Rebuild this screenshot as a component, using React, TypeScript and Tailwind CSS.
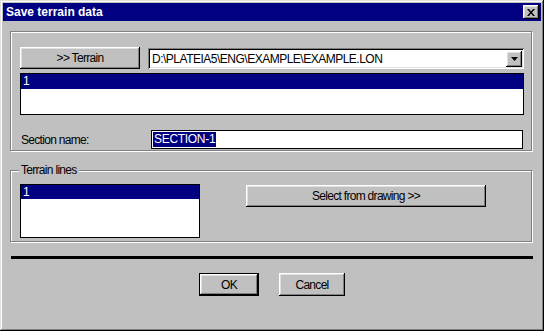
import React from 'react';

const raised =
  'bg-[#c0c0c0] shadow-[inset_-1px_-1px_0_#000,inset_1px_1px_0_#fff,inset_-2px_-2px_0_#808080,inset_2px_2px_0_#dfdfdf]';
const sunken =
  'bg-white shadow-[inset_1px_1px_0_#808080,inset_-1px_-1px_0_#fff,inset_2px_2px_0_#000,inset_-2px_-2px_0_#dfdfdf]';
const etched = 'border border-[#808080] shadow-[inset_1px_1px_0_#fff,1px_1px_0_#fff]';
const body = "font-['Liberation_Sans',Arial,sans-serif] text-[12px] tracking-[-0.7px] text-black";

function Button({ label, className = '' }: { label: string; className?: string }) {
  return (
    <div className={`${raised} flex items-center justify-center leading-none ${className}`}>
      <span>{label}</span>
    </div>
  );
}

export default function App() {
  return (
    <div className={`${body} w-[544px] h-[331px] bg-[#c0c0c0] p-[3px] flex flex-col shadow-[inset_-1px_-1px_0_#000,inset_1px_1px_0_#dfdfdf,inset_-2px_-2px_0_#808080,inset_2px_2px_0_#fff]`}>
      {/* Title bar */}
      <div className="h-[18px] bg-[#000080] flex items-center justify-between pl-[3px] pr-[2px]">
        <span className="font-bold text-white leading-none tracking-normal">Save terrain data</span>
        <div className={`${raised} w-[16px] h-[14px] flex items-center justify-center`}>
          <svg width="8" height="7" viewBox="0 0 8 7">
            <path d="M0 0h2l2 2.5L6 0h2L5 3.5 8 7H6L4 4.5 2 7H0l3-3.5z" fill="#000" />
          </svg>
        </div>
      </div>

      {/* Terrain group */}
      <div className={`${etched} ml-[7px] mt-[10px] w-[522px] h-[120px] pl-[9px] pt-[15px]`}>
        <div className="flex items-start gap-[8px]">
          <Button label=">> Terrain" className="w-[120px] h-[22px]" />
          <div className={`${sunken} mt-[1px] w-[376px] h-[21px] flex items-center pl-[4px] pr-[2px]`}>
            <span className="flex-1 leading-none tracking-[-0.5px]">D:\PLATEIA5\ENG\EXAMPLE\EXAMPLE.LON</span>
            <div className={`${raised} w-[16px] h-[16px] flex items-center justify-center`}>
              <svg width="7" height="4" viewBox="0 0 7 4">
                <path d="M0 0h7L3.5 4z" fill="#000" />
              </svg>
            </div>
          </div>
        </div>
        <div className="mt-[4px] w-[504px] h-[42px] bg-white border border-black">
          <div className="h-[15px] bg-[#000080] text-white pl-[2px] leading-[15px]">1</div>
        </div>
        <div className="mt-[15px] flex items-center">
          <span className="w-[131px] pl-[1px]">Section name:</span>
          <div className="w-[372px] h-[19px] bg-white border border-black flex items-center pl-[1px]">
            <span className="bg-[#000080] text-white leading-[15px] px-[1px] tracking-[-0.3px]">SECTION-1</span>
          </div>
        </div>
      </div>

      {/* Terrain lines group */}
      <div className={`${etched} relative ml-[7px] mt-[19px] w-[522px] h-[72px] pl-[9px] pt-[13px] flex items-start`}>
        <span className="absolute left-[8px] top-[-8px] bg-[#c0c0c0] px-[2px] leading-[14px]">Terrain lines</span>
        <div className="w-[180px] h-[54px] bg-white border border-black">
          <div className="h-[14px] bg-[#000080] text-white pl-[2px] leading-[14px]">1</div>
        </div>
        <Button label="Select from drawing >>" className="ml-[46px] mt-[1px] w-[240px] h-[22px]" />
      </div>

      {/* Separator */}
      <div className="ml-[8px] mt-[14px] w-[522px] h-[3px] bg-black" />

      {/* Dialog buttons */}
      <div className="mt-[14px] flex justify-center gap-[20px]">
        <div className="w-[60px] h-[23px] border border-black">
          <Button label="OK" className="w-full h-full" />
        </div>
        <Button label="Cancel" className="w-[66px] h-[23px]" />
      </div>
    </div>
  );
}
